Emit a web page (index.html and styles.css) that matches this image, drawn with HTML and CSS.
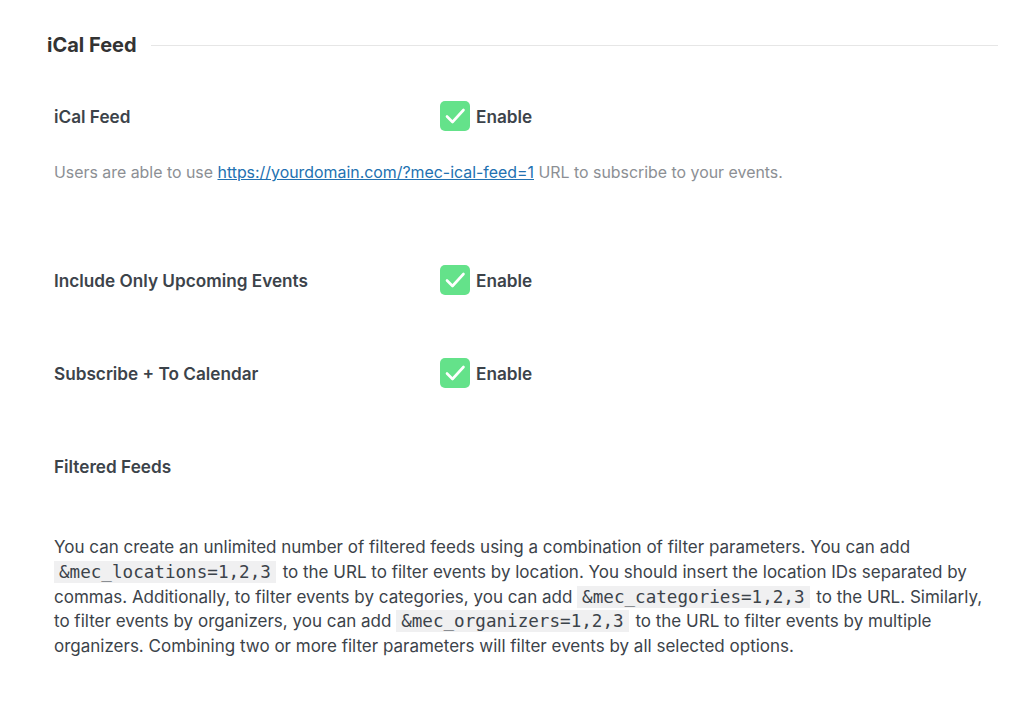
FILE: index.html
```html
<!DOCTYPE html>
<html lang="en">
<head>
    <meta charset="UTF-8">
    <meta name="viewport" content="width=device-width, initial-scale=1.0">
    <title>iCal Feed</title>
    <link rel="stylesheet" href="styles.css">
</head>
<body>
    <div class="section">
        <div class="section-title">
            <h3>iCal Feed</h3>
            <span class="rule"></span>
        </div>

        <div class="row first">
            <label class="row-label">iCal Feed</label>
            <label class="toggle">
                <span class="check">
                    <svg width="30" height="30" viewBox="0 0 30 30"><path d="M7 15.5l5.5 5.5L23.5 9" fill="none" stroke="#fff" stroke-width="2.6" stroke-linecap="round" stroke-linejoin="round"/></svg>
                </span>
                Enable
            </label>
        </div>
        <p class="description">Users are able to use <a href="#">https://yourdomain.com/?mec-ical-feed=1</a> URL to subscribe to your events.</p>

        <div class="row upcoming">
            <label class="row-label">Include Only Upcoming Events</label>
            <label class="toggle">
                <span class="check">
                    <svg width="30" height="30" viewBox="0 0 30 30"><path d="M7 15.5l5.5 5.5L23.5 9" fill="none" stroke="#fff" stroke-width="2.6" stroke-linecap="round" stroke-linejoin="round"/></svg>
                </span>
                Enable
            </label>
        </div>

        <div class="row subscribe">
            <label class="row-label">Subscribe + To Calendar</label>
            <label class="toggle">
                <span class="check">
                    <svg width="30" height="30" viewBox="0 0 30 30"><path d="M7 15.5l5.5 5.5L23.5 9" fill="none" stroke="#fff" stroke-width="2.6" stroke-linecap="round" stroke-linejoin="round"/></svg>
                </span>
                Enable
            </label>
        </div>

        <div class="filtered">
            <div class="row-label">Filtered Feeds</div>
            <p class="filter-text">You can create an unlimited number of filtered feeds using a combination of filter parameters. You can add <code>&amp;mec_locations=1,2,3</code> to the URL to filter events by location. You should insert the location IDs separated by commas. Additionally, to filter events by categories, you can add <code>&amp;mec_categories=1,2,3</code> to the URL. Similarly, to filter events by organizers, you can add <code>&amp;mec_organizers=1,2,3</code> to the URL to filter events by multiple organizers. Combining two or more filter parameters will filter events by all selected options.</p>
        </div>
    </div>
</body>
</html>
```

FILE: styles.css
```css
body {
    margin: 0;
    padding: 0;
    background-color: #fff;
    font-family: Inter, "Liberation Sans", sans-serif;
    color: #3c434a;
}
.section {
    padding: 31px 26px 0 47px;
}
.section-title {
    display: flex;
    align-items: center;
    gap: 14px;
    height: 28px;
}
.section-title h3 {
    margin: 0;
    font-size: 20px;
    font-weight: 700;
    color: #333;
}
.rule {
    flex: 1;
    height: 1px;
    background-color: #e6e6e6;
}
.row {
    display: flex;
    align-items: center;
    padding-left: 7px;
    height: 30px;
}
.row.first {
    margin-top: 42px;
}
.row.upcoming {
    margin-top: 81px;
}
.row.subscribe {
    margin-top: 63px;
}
.row-label {
    width: 386px;
    font-size: 17.2px;
    font-weight: 600;
    color: #3c434a;
}
.toggle {
    display: flex;
    align-items: center;
    gap: 6px;
    font-size: 17.2px;
    font-weight: 600;
    color: #3c434a;
}
.check {
    width: 30px;
    height: 30px;
    border-radius: 5px;
    background-color: #64e28a;
    display: flex;
}
.description {
    margin: 31px 0 0 7px;
    font-size: 15.9px;
    line-height: 22px;
    color: #8c8f94;
}
.description a {
    color: #2271b1;
}
.filtered {
    margin-top: 68px;
    padding-left: 7px;
}
.filtered .row-label {
    line-height: 22px;
}
.filter-text {
    margin: 57px 0 0;
    font-size: 17px;
    line-height: 24.8px;
    color: #3c434a;
}
code {
    font-family: "DejaVu Sans Mono", monospace;
    font-size: 17.6px;
    line-height: 20px;
    background-color: #f0f0f1;
    padding: 1px 5px;
    margin: 0 2px 0 0;
}
```
